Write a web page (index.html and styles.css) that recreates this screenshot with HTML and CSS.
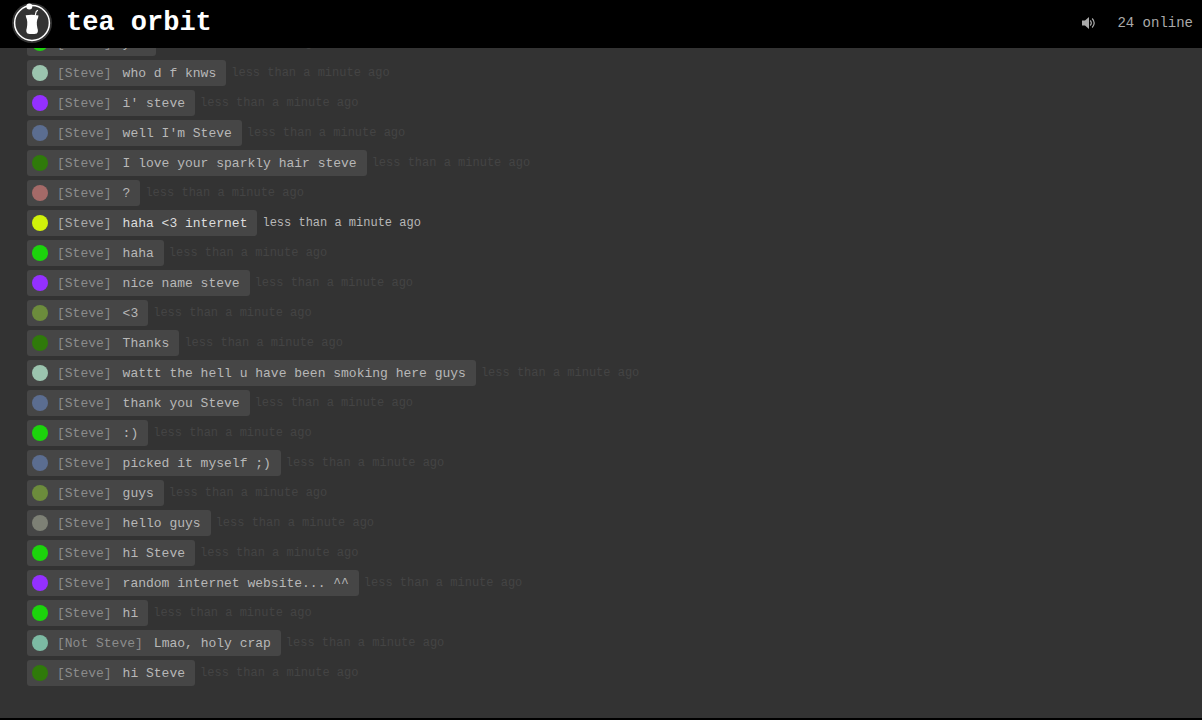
FILE: index.html
```html
<!DOCTYPE html>
<html lang="en">
<head>
  <meta charset="UTF-8">
  <meta name="viewport" content="width=device-width, initial-scale=1.0">
  <title>tea orbit</title>
  <link rel="stylesheet" href="styles.css">
</head>
<body>
  <header class="header">
    <svg class="logo" viewBox="0 0 40 40" aria-hidden="true">
      <circle cx="20" cy="20" r="20" fill="#333"/>
      <circle cx="20" cy="20" r="17.4" fill="none" stroke="#fff" stroke-width="1.5"/>
      <circle cx="17.3" cy="3.6" r="3" fill="#fff"/>
      <path d="M13.700 12.200Q20 11.200 26.500 12.400Q26.300 14.500 25.300 16.500Q24.500 19 24.900 22Q25.200 24.500 25.900 27Q26.200 29.500 24.800 30.600Q20 31.600 15.400 30.600Q14 29.500 14.300 27Q15 24.500 15.200 22Q15.500 19 14.900 16.500Q13.900 14.500 13.700 12.200Z" fill="#fff"/>
      <path d="M23.200 12.500L24.200 8.500L25.800 7.200" fill="none" stroke="#fff" stroke-width="1.100"/>
    </svg>
    <h1 class="title">tea orbit</h1>
    <button class="sound" type="button" aria-label="Toggle sound">
      <svg class="sound-icon" viewBox="0 0 14 14" aria-hidden="true">
        <path d="M0 4.500H3L7 1V13L3 9.500H0Z" fill="#aaa"/>
        <path d="M8.200 4.500Q10.400 7 8.200 9.500M10.200 2.500Q14.200 7 10.200 11.500" fill="none" stroke="#aaa" stroke-width="1.200"/>
      </svg>
    </button>
    <span class="online">24 online</span>
  </header>
  <main class="chat">
    <ul class="messages">
      <li class="message"><div class="bubble"><i class="dot green"></i><span class="name">[Steve]</span><span class="text">yes</span></div><span class="time">less than a minute ago</span></li>
      <li class="message"><div class="bubble"><i class="dot mint"></i><span class="name">[Steve]</span><span class="text">who d f knws</span></div><span class="time">less than a minute ago</span></li>
      <li class="message"><div class="bubble"><i class="dot purple"></i><span class="name">[Steve]</span><span class="text">i' steve</span></div><span class="time">less than a minute ago</span></li>
      <li class="message"><div class="bubble"><i class="dot blue"></i><span class="name">[Steve]</span><span class="text">well I'm Steve</span></div><span class="time">less than a minute ago</span></li>
      <li class="message"><div class="bubble"><i class="dot forest"></i><span class="name">[Steve]</span><span class="text">I love your sparkly hair steve</span></div><span class="time">less than a minute ago</span></li>
      <li class="message"><div class="bubble"><i class="dot rose"></i><span class="name">[Steve]</span><span class="text">?</span></div><span class="time">less than a minute ago</span></li>
      <li class="message active"><div class="bubble"><i class="dot yellow"></i><span class="name">[Steve]</span><span class="text">haha &lt;3 internet</span></div><span class="time">less than a minute ago</span></li>
      <li class="message"><div class="bubble"><i class="dot green"></i><span class="name">[Steve]</span><span class="text">haha</span></div><span class="time">less than a minute ago</span></li>
      <li class="message"><div class="bubble"><i class="dot purple"></i><span class="name">[Steve]</span><span class="text">nice name steve</span></div><span class="time">less than a minute ago</span></li>
      <li class="message"><div class="bubble"><i class="dot olive"></i><span class="name">[Steve]</span><span class="text">&lt;3</span></div><span class="time">less than a minute ago</span></li>
      <li class="message"><div class="bubble"><i class="dot forest"></i><span class="name">[Steve]</span><span class="text">Thanks</span></div><span class="time">less than a minute ago</span></li>
      <li class="message"><div class="bubble"><i class="dot mint"></i><span class="name">[Steve]</span><span class="text">wattt the hell u have been smoking here guys</span></div><span class="time">less than a minute ago</span></li>
      <li class="message"><div class="bubble"><i class="dot blue"></i><span class="name">[Steve]</span><span class="text">thank you Steve</span></div><span class="time">less than a minute ago</span></li>
      <li class="message"><div class="bubble"><i class="dot green"></i><span class="name">[Steve]</span><span class="text">:)</span></div><span class="time">less than a minute ago</span></li>
      <li class="message"><div class="bubble"><i class="dot blue"></i><span class="name">[Steve]</span><span class="text">picked it myself ;)</span></div><span class="time">less than a minute ago</span></li>
      <li class="message"><div class="bubble"><i class="dot olive"></i><span class="name">[Steve]</span><span class="text">guys</span></div><span class="time">less than a minute ago</span></li>
      <li class="message"><div class="bubble"><i class="dot grey"></i><span class="name">[Steve]</span><span class="text">hello guys</span></div><span class="time">less than a minute ago</span></li>
      <li class="message"><div class="bubble"><i class="dot green"></i><span class="name">[Steve]</span><span class="text">hi Steve</span></div><span class="time">less than a minute ago</span></li>
      <li class="message"><div class="bubble"><i class="dot purple"></i><span class="name">[Steve]</span><span class="text">random internet website... ^^</span></div><span class="time">less than a minute ago</span></li>
      <li class="message"><div class="bubble"><i class="dot green"></i><span class="name">[Steve]</span><span class="text">hi</span></div><span class="time">less than a minute ago</span></li>
      <li class="message"><div class="bubble"><i class="dot teal"></i><span class="name">[Not Steve]</span><span class="text">Lmao, holy crap</span></div><span class="time">less than a minute ago</span></li>
      <li class="message"><div class="bubble"><i class="dot forest"></i><span class="name">[Steve]</span><span class="text">hi Steve</span></div><span class="time">less than a minute ago</span></li>
    </ul>
  </main>
</body>
</html>
```
FILE: styles.css
```css
*{
  margin: 0;
  padding: 0;
  box-sizing: border-box;
}
body{
  display: flex;
  flex-direction: column;
  height: 100vh;
  background: #333;
  font-family: "Liberation Mono", "Courier New", monospace;
  font-size: 13px;
  color: #b8b8b8;
}
.header{
  display: flex;
  align-items: center;
  flex-shrink: 0;
  height: 48px;
  padding: 0 9px 2px 12px;
  background: #000;
}
.logo{
  width: 40px;
  height: 40px;
  margin-right: 14px;
}
.title{
  font-size: 27px;
  line-height: 32px;
  font-weight: bold;
  color: #fff;
}
.sound{
  margin-left: auto;
  margin-right: 21px;
  border: 0;
  background: none;
  cursor: pointer;
}
.sound-icon{
  display: block;
  width: 14px;
  height: 14px;
}
.online{
  font-size: 14px;
  line-height: 20px;
  color: #aaa;
}
/* newest message stays at the bottom, older ones run off the top */
.chat{
  display: flex;
  flex: 1;
  flex-direction: column;
  justify-content: flex-end;
  min-height: 0;
  overflow: hidden;
  padding: 0 27px 32px;
  border-bottom: 2px solid #000;
}
.messages{
  display: flex;
  flex-direction: column;
  gap: 4px;
  list-style: none;
}
.message{
  display: flex;
  align-items: center;
  gap: 5px;
}
.bubble{
  display: flex;
  align-items: center;
  height: 26px;
  padding: 0 10px 0 5px;
  border-radius: 3px;
  background: #464646;
}
.dot{
  width: 16px;
  height: 16px;
  margin-right: 9px;
  border-radius: 50%;
}
.name{
  margin-right: 11px;
  color: #8c8c8c;
}
.time{
  font-size: 12px;
  line-height: 16px;
  color: #444;
}
.active .name{
  color: #aaa;
}
.active .text{
  color: #ddd;
}
.active .time{
  color: #b8b8b8;
}
.green{
  background: #1cd30c;
}
.mint{
  background: #9bc4ae;
}
.purple{
  background: #9430ff;
}
.blue{
  background: #5b6d90;
}
.forest{
  background: #2f7a0a;
}
.rose{
  background: #a56a68;
}
.yellow{
  background: #d0f20a;
}
.olive{
  background: #6c8c3c;
}
.grey{
  background: #7d8075;
}
.teal{
  background: #7cbaa3;
}
```
